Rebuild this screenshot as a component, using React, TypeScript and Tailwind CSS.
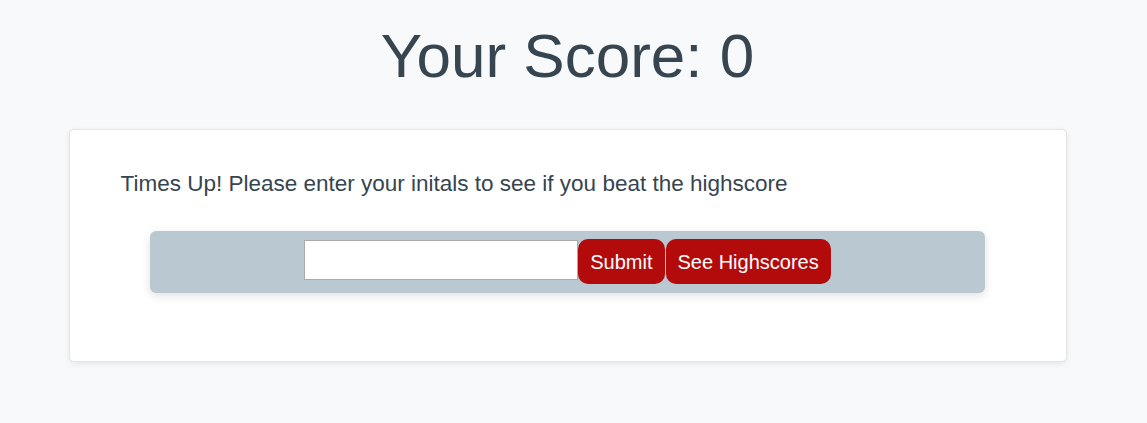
export default function App() {
	return (
		<div className="min-h-screen bg-[#f8f9fb] text-[#36454f]" style={{ fontFamily: '"Liberation Sans", Arial, sans-serif' }}>
			<div className="w-[1135px]">
				<h1 className="pt-[20px] text-center text-[62px] leading-[72px] font-normal">Your Score: 0</h1>

				<div className="mx-auto mt-[37px] w-[998px] h-[233px] rounded-[5px] border border-[#e3e4e6] bg-white shadow-[0_2px_6px_rgba(0,0,0,0.08)] pt-[41px]">
					<p className="pl-[51px] text-[22.5px] leading-[26px]">
						Times Up! Please enter your initals to see if you beat the highscore
					</p>

					<div className="mx-auto mt-[34px] w-[835px] h-[62px] rounded-[6px] bg-[#bac8d2] shadow-[0_3px_10px_rgba(0,0,0,0.12)] pt-2 flex justify-center items-start">
						<input
							type="text"
							className="mt-px w-[274px] h-[40px] border border-[#a9a9a9] bg-white px-2 text-[16px] outline-none"
						/>
						<button className="h-[45px] px-3 rounded-[10px] bg-[#b30b0b] text-white text-[20px] leading-none">
							Submit
						</button>
						<button className="ml-px h-[45px] px-3 rounded-[10px] bg-[#b30b0b] text-white text-[20px] leading-none">
							See Highscores
						</button>
					</div>
				</div>
			</div>
		</div>
	);
}
